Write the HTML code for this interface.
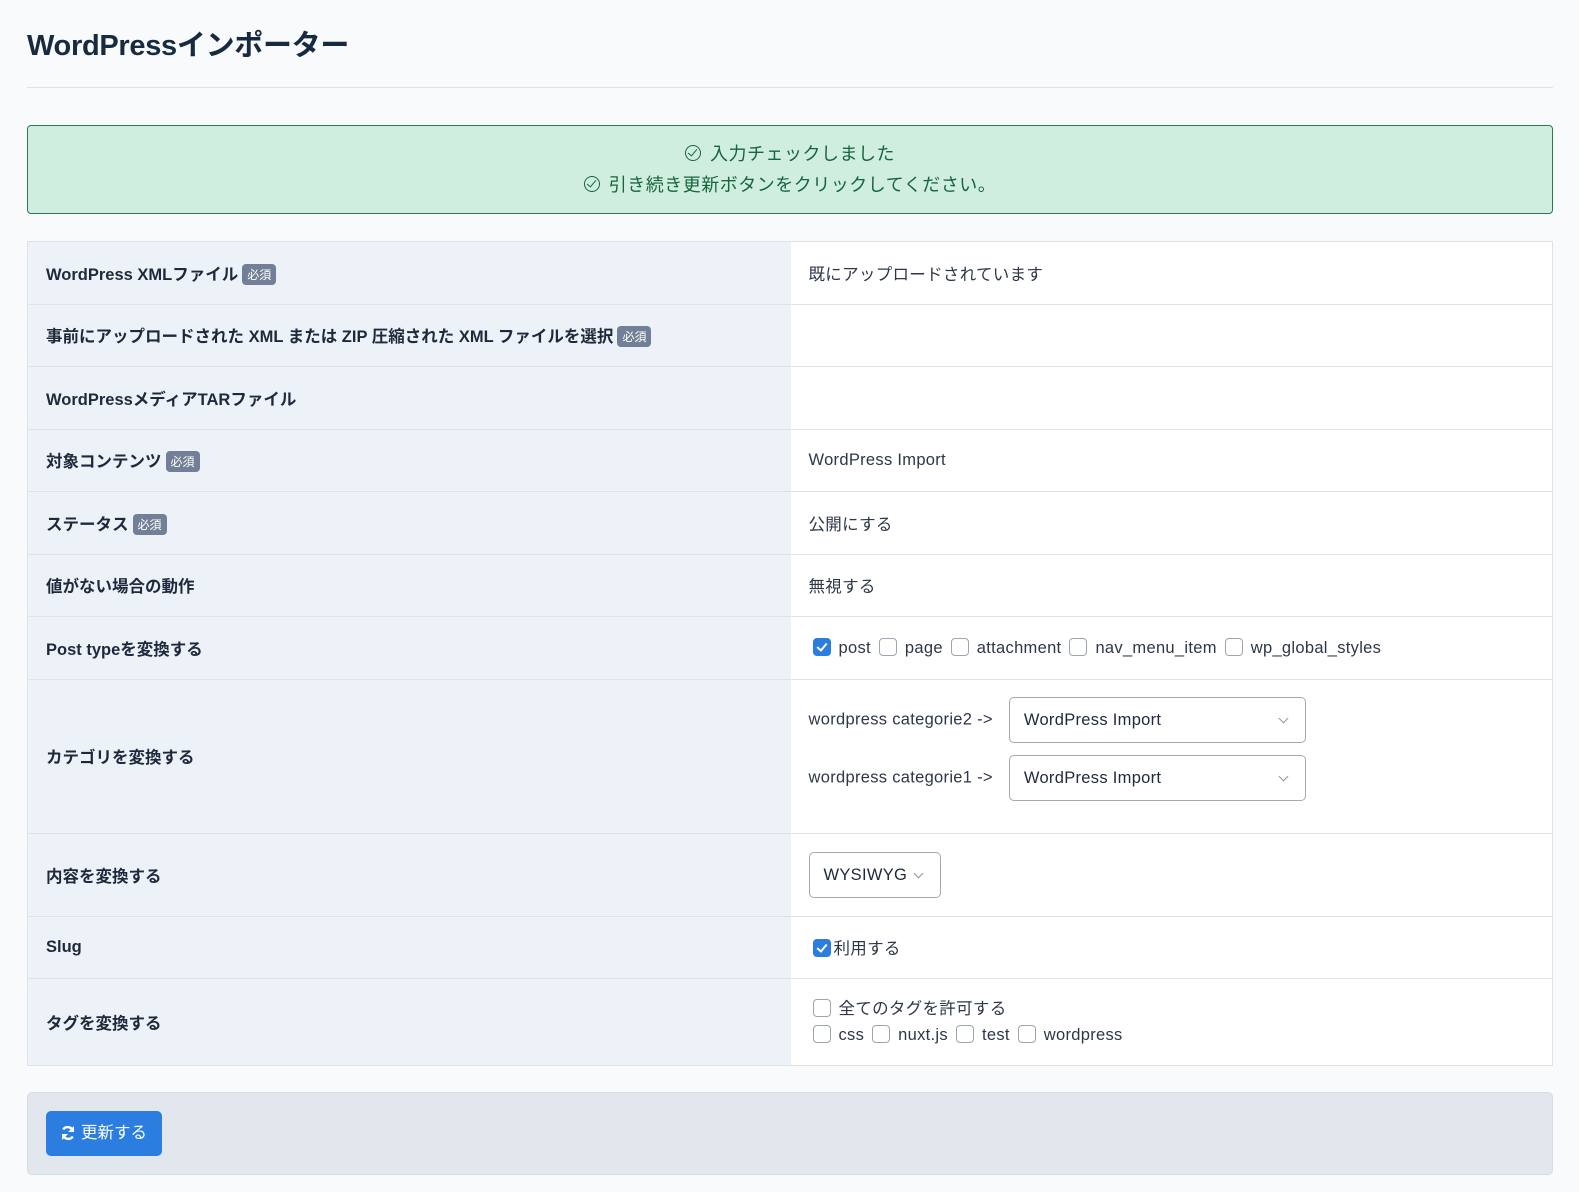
<!DOCTYPE html>
<html><head><meta charset="utf-8"><style>
*{box-sizing:border-box;margin:0;padding:0}
body{width:1579px;height:1192px;background:#f8fafc;font-family:"Liberation Sans","Noto Sans CJK JP",sans-serif;color:#1e293b;position:relative;overflow:hidden}
h1{position:absolute;left:27px;top:22px;font-size:29px;font-weight:bold;color:#172a3f;letter-spacing:-0.3px}
.hr{position:absolute;left:27px;top:87px;width:1526px;height:1px;background:#dfe3e8}
.alert{position:absolute;left:27px;top:125px;width:1526px;height:89px;background:#cfeee0;border:1px solid #2a7a4f;border-radius:4px;color:#17653d;font-size:18px;text-align:center;padding-top:13px;line-height:31px;letter-spacing:0.5px}
.ck{display:inline-block;width:16px;height:16px;border:1.6px solid #17653d;border-radius:50%;vertical-align:-1px;margin-right:9px;position:relative}
.ck:after{content:"";position:absolute;left:4px;top:1px;width:4px;height:8px;border:solid #17653d;border-width:0 1.6px 1.6px 0;transform:rotate(40deg)}
table{position:absolute;left:27px;top:241px;width:1526px;border-collapse:collapse;border:1px solid #dfe3e8;font-size:16.5px}
td{border-top:1px solid #dfe3e8;padding:0 18px;vertical-align:middle}
td.l{width:763px;background:#edf2f8;font-weight:bold;color:#1e293b}
td.v{background:#fff;color:#2d3748;letter-spacing:0.3px}
.b{display:inline-block;background:#718096;color:#fff;font-size:12px;font-weight:normal;padding:2px 5px;border-radius:4px;vertical-align:1px;margin-left:4px}
.cb{display:inline-block;width:18px;height:18px;border:1px solid #9aa5b1;border-radius:4px;vertical-align:-3px;margin:0 8px 0 8px;background:#fff}
.cb:first-child{margin-left:4px}
.cb.on{background:#2b7de0;border-color:#2b7de0;position:relative}
.cb.on:after{content:"";position:absolute;left:5.5px;top:2px;width:4px;height:8px;border:solid #fff;border-width:0 2px 2px 0;transform:rotate(40deg)}
.sel{display:inline-block;width:297px;height:46px;border:1px solid #a0aab4;border-radius:5px;vertical-align:middle;padding:0 14px;line-height:44px;position:relative;color:#1e293b;margin-left:16px}
.sel:after{content:"";position:absolute;right:18px;top:17px;width:6px;height:6px;border:solid #8a96a3;border-width:0 1px 1px 0;transform:rotate(45deg)}
.foot{position:absolute;left:27px;top:1092px;width:1526px;height:83px;background:#e2e7ee;border:1px solid #d5dbe3;border-radius:5px}
.btn{position:absolute;left:18px;top:18px;width:116px;height:45px;background:#2b7de0;border-radius:5px;color:#fff;font-size:16.5px;line-height:45px;padding-left:35px}
</style></head><body>
<h1>WordPressインポーター</h1>
<div class="hr"></div>
<div class="alert"><div><span class="ck"></span>入力チェックしました</div><div><span class="ck"></span>引き続き更新ボタンをクリックしてください。</div></div>
<table>
<tr style="height:62.5px"><td class="l">WordPress XMLファイル<span class="b">必須</span></td><td class="v">既にアップロードされています</td></tr>
<tr style="height:62.5px"><td class="l">事前にアップロードされた XML または ZIP 圧縮された XML ファイルを選択<span class="b">必須</span></td><td class="v"></td></tr>
<tr style="height:62.5px"><td class="l">WordPressメディアTARファイル</td><td class="v"></td></tr>
<tr style="height:62.5px"><td class="l">対象コンテンツ<span class="b">必須</span></td><td class="v">WordPress Import</td></tr>
<tr style="height:62.5px"><td class="l">ステータス<span class="b">必須</span></td><td class="v">公開にする</td></tr>
<tr style="height:62.5px"><td class="l">値がない場合の動作</td><td class="v">無視する</td></tr>
<tr style="height:62.5px"><td class="l">Post typeを変換する</td><td class="v"><span class="cb on"></span>post<span class="cb"></span>page<span class="cb"></span>attachment<span class="cb"></span>nav_menu_item<span class="cb"></span>wp_global_styles</td></tr>
<tr style="height:154px"><td class="l">カテゴリを変換する</td><td class="v" style="padding-bottom:14px"><div style="margin-bottom:12px">wordpress categorie2 -&gt;<span class="sel">WordPress Import</span></div><div>wordpress categorie1 -&gt;<span class="sel">WordPress Import</span></div></td></tr>
<tr style="height:83px"><td class="l">内容を変換する</td><td class="v"><span class="sel" style="width:132px;margin-left:0">WYSIWYG</span></td></tr>
<tr style="height:62.5px"><td class="l">Slug</td><td class="v"><span class="cb on" style="margin-right:3px"></span>利用する</td></tr>
<tr style="height:87px"><td class="l">タグを変換する</td><td class="v"><div style="line-height:26px"><span class="cb"></span>全てのタグを許可する</div><div style="line-height:26px"><span class="cb"></span>css<span class="cb"></span>nuxt.js<span class="cb"></span>test<span class="cb"></span>wordpress</div></td></tr>
</table>
<div class="foot"><div class="btn"><svg style="position:absolute;left:14px;top:14px" width="16" height="16" viewBox="0 0 16 16"><path d="M13 6A5.5 5.5 0 0 0 3.2 4.5M3 10a5.5 5.5 0 0 0 9.8 1.5" stroke="#fff" stroke-width="2.4" fill="none"/><path d="M14 1v6H8zM2 15V9h6z" fill="#fff"/></svg>更新する</div></div>
</body></html>
